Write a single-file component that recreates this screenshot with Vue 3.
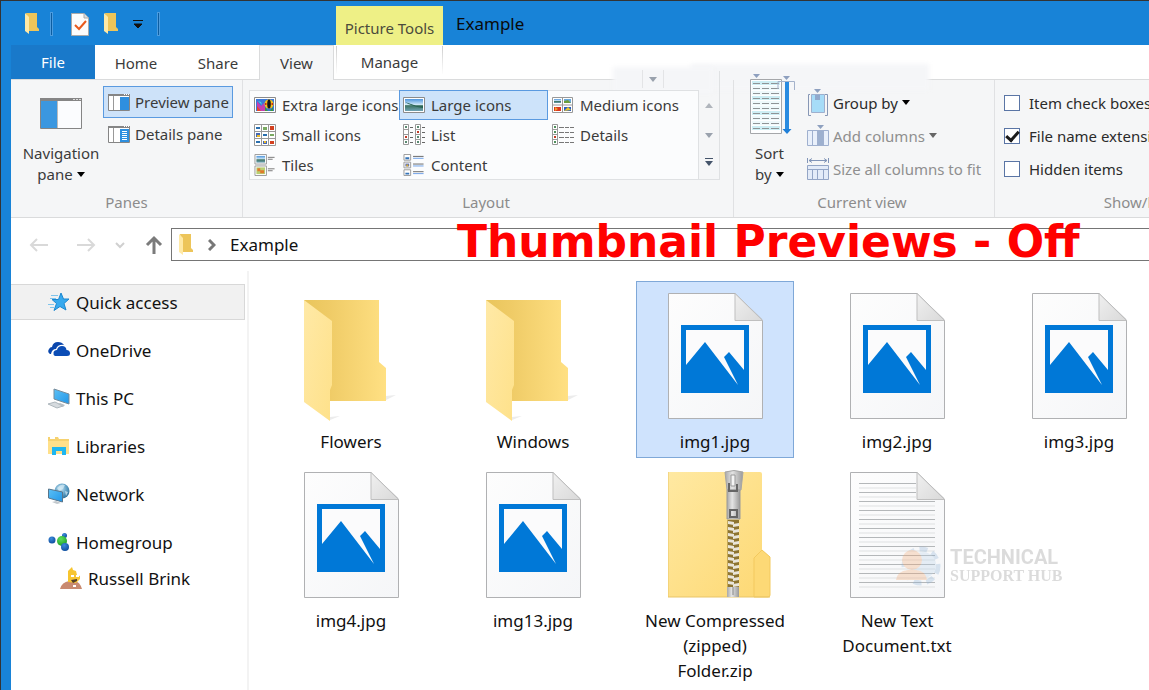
<script setup>
import { ref } from 'vue'

const layouts = [
  { label: 'Extra large icons', icon: 'i-xl' },
  { label: 'Large icons', icon: 'i-large' },
  { label: 'Medium icons', icon: 'i-medium' },
  { label: 'Small icons', icon: 'i-small' },
  { label: 'List', icon: 'i-list' },
  { label: 'Details', icon: 'i-details' },
  { label: 'Tiles', icon: 'i-tiles' },
  { label: 'Content', icon: 'i-content' },
]
const layout = ref('Large icons')

const checks = ref([
  { id: 'check-boxes', label: 'Item check boxes', on: false },
  { id: 'extensions', label: 'File name extensions', on: true },
  { id: 'hidden', label: 'Hidden items', on: false },
])

const places = [
  { label: 'Quick access', icon: 'i-star', current: true },
  { label: 'OneDrive', icon: 'i-cloud' },
  { label: 'This PC', icon: 'i-pc' },
  { label: 'Libraries', icon: 'i-lib' },
  { label: 'Network', icon: 'i-net' },
  { label: 'Homegroup', icon: 'i-home', child: { label: 'Russell Brink', icon: 'i-user' } },
]

const files = [
  { name: 'Flowers', icon: 'f-folder' },
  { name: 'Windows', icon: 'f-folder' },
  { name: 'img1.jpg', icon: 'f-image' },
  { name: 'img2.jpg', icon: 'f-image' },
  { name: 'img3.jpg', icon: 'f-image' },
  { name: 'img4.jpg', icon: 'f-image' },
  { name: 'img13.jpg', icon: 'f-image' },
  { name: 'New Compressed (zipped) Folder.zip', icon: 'f-zip' },
  { name: 'New Text Document.txt', icon: 'f-text', mark: true },
]
const selected = ref('img1.jpg')
const textLines = Array.from({ length: 24 }, (_, i) => i)
const teeth = Array.from({ length: 11 }, (_, i) => i)
const sortRows = Array.from({ length: 10 }, (_, i) => i)
</script>

<template>
  <div class="window">
    <svg class="defs" aria-hidden="true">
      <defs>
        <linearGradient id="g-back" x1="0" y1="0" x2="1" y2="0"><stop offset="0" stop-color="#e9c55c" /><stop offset=".3" stop-color="#efcb66" /><stop offset="1" stop-color="#ffe083" /></linearGradient>
        <linearGradient id="g-flap" x1="0" y1="0" x2="1" y2="1"><stop offset="0" stop-color="#ffe9a6" /><stop offset="1" stop-color="#fee18a" /></linearGradient>
        <linearGradient id="g-page" x1="0" y1="0" x2="1" y2="1"><stop offset="0" stop-color="#fdfdfd" /><stop offset="1" stop-color="#f5f6f8" /></linearGradient>
        <linearGradient id="g-fold" x1="0" y1="0" x2="1" y2="1"><stop offset="0" stop-color="#f0f0f0" /><stop offset="1" stop-color="#d9d9d9" /></linearGradient>
        <linearGradient id="g-metal" x1="0" y1="0" x2="1" y2="0"><stop offset="0" stop-color="#a8a8a8" /><stop offset=".4" stop-color="#e4e4e4" /><stop offset="1" stop-color="#999" /></linearGradient>
        <linearGradient id="g-zip" x1="0" y1="0" x2="1" y2="1"><stop offset="0" stop-color="#ffe9a2" /><stop offset="1" stop-color="#fdd873" /></linearGradient>
        <linearGradient id="g-land" x1="0" y1="0" x2="0" y2="1"><stop offset="0" stop-color="#4d94dc" /><stop offset=".5" stop-color="#d8eefa" /><stop offset=".55" stop-color="#3c7260" /><stop offset="1" stop-color="#6fa3b5" /></linearGradient>
        <linearGradient id="g-screen" x1="0" y1="0" x2="1" y2="1"><stop offset="0" stop-color="#5cc0f5" /><stop offset="1" stop-color="#2196e8" /></linearGradient>
        <radialGradient id="g-globe" cx=".4" cy=".35" r=".7"><stop offset="0" stop-color="#c9e4f2" /><stop offset=".6" stop-color="#5a9dc4" /><stop offset="1" stop-color="#2e6d97" /></radialGradient>
        <radialGradient id="g-blue" cx=".4" cy=".3" r=".7"><stop offset="0" stop-color="#3d8bdb" /><stop offset="1" stop-color="#0f4fa0" /></radialGradient>
        <radialGradient id="g-green" cx=".4" cy=".3" r=".7"><stop offset="0" stop-color="#5fe05c" /><stop offset="1" stop-color="#1fa32b" /></radialGradient>
      </defs>

      <symbol id="f-folder" viewBox="0 0 96 126" overflow="visible">
        <path d="M82 103l10-1-10 5zM26 124l10-1-10 4z" fill="#ececec" />
        <path d="M0 7H75V69L82 75V108H26L5 90z" fill="url(#g-back)" />
        <path d="M0 7L28 28V92L26 97V128L0 109z" fill="url(#g-flap)" />
      </symbol>
      <symbol id="page" viewBox="0 0 96 126">
        <path d="M.5.5H67L94.500 27V125.500H.5z" fill="url(#g-page)" stroke="#b0b1b3" />
        <path d="M67 .5V27.500H94.500z" fill="url(#g-fold)" stroke="#bfbfbf" />
      </symbol>
      <symbol id="f-image" viewBox="0 0 96 126">
        <use href="#page" width="96" height="126" />
        <path d="M13 32H81V100H13z" fill="#0078d7" />
        <path d="M18 37H76V77L61 59 56 64 70 92 37 49 18 72z" fill="#fbfbfc" />
      </symbol>
      <symbol id="f-text" viewBox="0 0 96 126">
        <use href="#page" width="96" height="126" />
        <path v-for="n in textLines" :key="n" :d="`M9 ${11.5 + n * 4.5}H${n < 4 ? 66 : 85}`" :stroke="n % 2 ? '#dfe1e2' : '#b4b7b9'" />
      </symbol>
      <symbol id="f-zip" viewBox="0 0 104 128">
        <path d="M0 2H92Q94 2 94 4V80L102 87V125Q102 127 100 127H0z" fill="url(#g-zip)" />
        <path d="M86 127V88L94 80L102 87V125Q102 127 100 127z" fill="#fdd976" stroke="#f3c95e" />
        <path d="M0 2V127H102" fill="none" stroke="#e9c568" />
        <path d="M59.500 50H71V118H59.500z" fill="#8d7430" />
        <g v-for="n in teeth" :key="n">
          <path :d="`M60 ${51 + n * 6}l6 1v3l-6-1zM65 ${54 + n * 6}l6-1v3l-6 1z`" fill="#e9e5da" />
        </g>
        <path d="M59 117h12v10h-12z" fill="url(#g-metal)" /><path d="M65 117v8" stroke="#888" />
        <path d="M57 2Q66-1 75 2L73 20H59z" fill="url(#g-metal)" stroke="#a5a5a5" />
        <path d="M59 20H72V49H59z" fill="url(#g-metal)" stroke="#999" />
        <path d="M63 5h4v11h-4z" fill="#f4f4f4" stroke="#999" /><path d="M61 13v8h8v-7M62 40h7v7h-7z" fill="none" stroke="#666" stroke-width="2" />
      </symbol>

      <symbol id="i-folder" viewBox="0 0 16 22"><path d="M2 0H13V14L15 16V18H5z" fill="#edc55a" /><path d="M1 0L5 4V21L1 18z" fill="#ffe9a6" /></symbol>
      <symbol id="i-doc" viewBox="0 0 18 23"><path d="M.5.5H13L17.500 5V22.500H.5z" fill="#fcfcfc" stroke="#aaa" /><path d="M13 .5V5H17.500" fill="#ddd" stroke="#aaa" /><path d="M4 12l4 4 7-8" fill="none" stroke="#e8591c" stroke-width="2" /></symbol>

      <symbol id="i-nav" viewBox="0 0 42 31"><path d="M.5.5h41v30H.5z" fill="#fbfcfe" stroke="#858585" /><path d="M0 0h42v3H0z" fill="#858585" /><path d="M1 3h16v27H1z" fill="#3b97e0" /><path d="M33 1.500h2m1 0h2m1 0h2" stroke="#ddd" /><path d="M17.500 3v27" stroke="#bbb" /></symbol>
      <symbol id="i-preview" viewBox="0 0 22 17"><path d="M.5.5h21v16H.5z" fill="#fff" stroke="#858585" /><path d="M0 0h22v2H0z" fill="#858585" /><path d="M12 3h9v13h-9z" fill="#2e8fdf" /><path d="M5.500 2v14" stroke="#999" /><path d="M16 .5h1m1 0h1m1 0h1" stroke="#fff" /></symbol>
      <symbol id="i-dpane" viewBox="0 0 22 17"><use href="#i-preview" width="22" height="17" /><path d="M14 5.500h5m-5 2h5m-5 2h5m-5 2h5m-5 2h5" stroke="#fff" /></symbol>

      <symbol id="i-xl" viewBox="0 0 22 22"><path d="M.5 3.500h21v15H.5z" fill="#fff" stroke="#8b8b8b" /><path d="M2 5h18v12H2z" fill="#3b78d8" /><path d="M3 7l4 5 3-3 2 8H3z" fill="#c33fb0" /><path d="M3 12l4 5H3z" fill="#e8452c" /><path d="M4 7l3 1 1 3z" fill="#49d6e8" /><ellipse cx="15" cy="10" rx="4.500" ry="4.500" fill="#f5c21a" /><ellipse cx="15" cy="10" rx="1.800" ry="4.500" fill="#171717" /><path d="M11 13l3 4h2l3-4v4h-8z" fill="#3a9a3a" /><path d="M11 10h1.500m5 0h1.500" stroke="#d12c12" stroke-width="2" /></symbol>
      <symbol id="i-large" viewBox="0 0 22 22"><path d="M.5 3.500h21v15H.5z" fill="#fff" stroke="#8b8b8b" /><path d="M2 5h18v12H2z" fill="url(#g-land)" /><path d="M2 8q6 4 18 6v-2q-7 1-9-1z" fill="#256150" /></symbol>
      <symbol id="i-medium" viewBox="0 0 22 22"><path d="M.5 3.500h20v15H.5zM10.500 3v16M0 11h21" fill="#fff" stroke="#999" /><path d="M2 5h7v4H2z" fill="url(#g-land)" /><path d="M12 5h7v4h-7z" fill="#68a8dd" /><path d="M12 7l4-1 3 3h-7z" fill="#6a9e3c" /><path d="M2 13h7v4H2z" fill="#d9381e" /><path d="M3 13l3 2-3 2z" fill="#f0a32d" /><path d="M12 13h7v4h-7z" fill="#2b5fc0" /><path d="M12 17l4-4 3 3z" fill="#e8c42a" /></symbol>
      <symbol id="i-small" viewBox="0 0 22 22"><path d="M.5.5h21v21H.5zM7.500 0v22M14.500 0v22M0 7.500h22M0 14.500h22" fill="#fff" stroke="#999" /><path d="M2 3h4v2H2zM9 10h4v2H9zM2 17h4v2H2z" fill="#2a6fae" /><path d="M9 3h4v3H9zM16 10h4v2h-4z" fill="#7aaa62" /><path d="M16 2h4v4h-4zM16 17h4v3h-4z" fill="#d3401f" /><path d="M2 9h4v4H2zM9 17h4v3H9z" fill="#4468b5" /><path d="M3 11h3v2H3zM10 17h2v2h-2z" fill="#edbb26" /></symbol>
      <symbol id="i-list" viewBox="0 0 22 22"><path d="M.5.500h5v20h-5zM.5 5.500h5m-5 5h5m-5 5h5M12.500.5h5v20h-5zM12.500 5.500h5m-5 5h5m-5 5h5" fill="#fff" stroke="#999" /><path d="M7 3.500h3m-3 5h3m-3 5h3m-3 5h3M19 3.500h3m-3 5h3m-3 5h3m-3 5h3" stroke="#666" /><path d="M2 3h2m10 0h2m-2 10h2M2 18h2m10 0h2" stroke="#5a8a72" stroke-width="2" /><path d="M2 13h2M14 8h2" stroke="#c23a26" stroke-width="2" /></symbol>
      <symbol id="i-details" viewBox="0 0 22 22"><path d="M.5.500h5v20h-5zM.5 5.500h5m-5 5h5m-5 5h5" fill="#fff" stroke="#999" /><path d="M7 3.500h5m1 0h4m1 0h4M7 8.500h5m1 0h4m1 0h4M7 13.500h5m1 0h4m1 0h4M7 18.500h5m1 0h4m1 0h4" stroke="#777" /><path d="M2 3h2M2 8h2M2 18h2" stroke="#4e8f5c" stroke-width="2" /><path d="M2 13h2" stroke="#c23a26" stroke-width="2" /></symbol>
      <symbol id="i-tiles" viewBox="0 0 22 23"><path d="M.5.500h12v10h-12zM.5 12.500h12v10h-12z" fill="#fff" stroke="#999" /><path d="M2 2h9v7H2z" fill="url(#g-land)" /><path d="M2 14h9v7H2z" fill="#b9cf72" /><path d="M3 15h3v3H3zM6 17h4v3H6z" fill="#e07a2c" /><path d="M14 3.500h7m-7 2h5m-5 10h7m-7 2h5" stroke="#777" /></symbol>
      <symbol id="i-content" viewBox="0 0 22 23"><path d="M.5.500h7v6h-7zM.5 8.500h7v6h-7zM.5 16.500h7v6h-7z" fill="#fff" stroke="#999" /><path d="M2 3.500h4v2H2zM2 19.500h4v2H2z" fill="#3574b8" /><path d="M2 10h4v3H2z" fill="#5a6db0" /><path d="M3 11h2v2H3z" fill="#e3b22a" /><path d="M10 2.500h11m-11 8h11m-11 8h11" stroke="#666" /><path d="M10 4.500h11m-11 8h11m-11 8h11" stroke="#6c9fe8" /></symbol>

      <symbol id="i-sort" viewBox="0 0 46 60">
        <path d="M.5 5.500h31v54h-31z" fill="#fdfeff" stroke="#a5a7aa" />
        <path v-for="n in sortRows" :key="n" :d="`M2 ${9 + n * 5}h28`" :stroke="n % 3 ? '#eef9fb' : '#cdeef4'" stroke-width="4" />
        <path v-for="n in sortRows" :key="`r${n}`" :d="`M3 ${9.5 + n * 5}h7m2 0h7m2 0h8`" stroke="#8f9496" />
        <path d="M3 0h7L6.500 4zM33 2h7L36.500 6z" fill="#8ea0bf" /><path d="M28 15V7.500H44.500V16" fill="none" stroke="#a4b2cb" />
        <path d="M35 8h4v48h-4z" fill="#2a8be0" /><path d="M32.500 55h9L37 60z" fill="#1f7fd8" />
      </symbol>
      <symbol id="i-group" viewBox="0 0 22 28"><path d="M7 0h7l-3.500 4z" fill="#8ea0bf" /><path d="M4.500 5.500h13v18h-13z" fill="#a6dcf8" stroke="#9fb0ce" /><path d="M8 6h5v5H8z" fill="#91a9cc" /><path d="M3 5.500H1.500V26.500H4M18 5.500h2.500V26.500H18" fill="none" stroke="#8797b5" /></symbol>
      <symbol id="i-add" viewBox="0 0 22 22"><path d="M10 0h7l-3.500 4z" fill="#8ea0bf" /><path d="M.5 5.500h21v15H.5zM5.500 5v16M10.500 5v16M16.500 5v16" fill="#e9f0fb" stroke="#9fb0cf" /><path d="M11 6h5v14h-5z" fill="#9db0cf" /></symbol>
      <symbol id="i-size" viewBox="0 0 22 22"><path d="M.5 0v5M21.500 0v5M2 2.500h18M5 .5l-3 2 3 2M17 .5l3 2-3 2" fill="none" stroke="#8295b8" /><path d="M.5 7.500h21v14H.5zM.5 11.500h21M5.500 11v11M10.500 11v11M16.500 11v11" fill="#e3ebf8" stroke="#93a5c6" /></symbol>

      <symbol id="i-star" viewBox="0 0 22 20"><path d="M13 1l2.500 6H21l-5 4.500 2 6.500-6-3.500-6 4 2.500-7L4 7.500h6.500z" fill="#36a9ee" stroke="#1b87d0" /><path d="M3 3.500h7M2 6.500h6M0 12.500h6M2 15.500h4" stroke="#7fc4ec" /></symbol>
      <symbol id="i-cloud" viewBox="0 0 22 20"><path d="M2 14Q-1 12 1 9q1-2 3-2 1-5 6-5 4 0 6 3-6-1-8 4-4 0-5 5z" fill="#0a47ad" /><path d="M7 16q-2-1-1.500-3.500T9 10q1-4 5-4 4 0 4.500 4Q22 10 22 13.500q0 2.500-3 2.500z" fill="#0b4db6" /></symbol>
      <symbol id="i-pc" viewBox="0 0 22 22"><path d="M6 2L21 7V17L6 12z" fill="url(#g-screen)" stroke="#768b9a" /><path d="M0 17l7-2 8 4-6 2z" fill="#d6dbdf" stroke="#aeb7bd" /><path d="M12 16l5 2-2 2-5-3z" fill="#b7bec4" /></symbol>
      <symbol id="i-lib" viewBox="0 0 22 20"><path d="M0 1h10l1 2h10v15H0z" fill="#f6d270" /><path d="M2 1h5v2H2z" fill="#fff" /><path d="M0 5h21v13H0z" fill="#ffe08a" /><path d="M4 11h14v8h-4v-4H8v4H4z" fill="#1fb6f0" /></symbol>
      <symbol id="i-net" viewBox="0 0 22 22"><circle cx="14" cy="8" r="7.500" fill="url(#g-globe)" /><path d="M9 5q4-5 8-3l-2 4-4 2zM17 8l3 1-2 4z" fill="#d7edf6" opacity=".7" /><path d="M.5 6L14.500 9V19L.5 15z" fill="url(#g-screen)" stroke="#58758b" /><path d="M4 19l5 2 4-1-5-2z" fill="#c2c8cd" /></symbol>
      <symbol id="i-home" viewBox="0 0 22 20"><circle cx="4" cy="8" r="3.500" fill="url(#g-blue)" /><circle cx="16.500" cy="3.500" r="2.500" fill="url(#g-blue)" /><circle cx="14" cy="9" r="5" fill="url(#g-green)" /><circle cx="17" cy="15" r="4" fill="url(#g-blue)" /></symbol>
      <symbol id="i-user" viewBox="0 0 22 22"><path d="M0 22q2-7 9-8h6q5 1 7 8z" fill="#c98a70" /><path d="M8 15L8 4 12 0l1 3 3 1 1 4 3 1v3l-4 4z" fill="#f7c52f" /><path d="M11 8h3v2h-3zM16 8h3v2h-3z" fill="#fff" /><path d="M11 13l6-1v2l-4 2z" fill="#4f3e29" /><path d="M13 18h3v2h-3z" fill="#fff" /></symbol>
    </svg>

    <header class="titlebar">
      <div class="quick">
        <svg class="s-folder"><use href="#i-folder" /></svg>
        <span class="bar first"></span>
        <button class="plain" aria-label="Properties"><svg class="s-doc"><use href="#i-doc" /></svg></button>
        <button class="plain" aria-label="New folder"><svg class="s-folder"><use href="#i-folder" /></svg></button>
        <button class="plain" aria-label="Customize toolbar"><svg width="10" height="8"><path d="M0 .5h10M1 4h8L5 8z" stroke="#111" fill="#111" stroke-width="1" /></svg></button>
        <span class="bar"></span>
      </div>
      <div class="tools">Picture Tools</div>
      <div class="caption">Example</div>
    </header>

    <nav class="tabs">
      <button class="tab file">File</button>
      <button class="tab">Home</button>
      <button class="tab share">Share</button>
      <button class="tab active">View</button>
      <button class="tab manage">Manage</button>
    </nav>

    <section class="ribbon">
      <div class="patch"></div>
      <div class="patch left"></div>
      <div class="stray"><span class="tri"></span></div>
      <div class="group panes">
        <div class="body">
          <button class="big"><svg width="42" height="31"><use href="#i-nav" /></svg><span>Navigation<br />pane <i class="drop"></i></span></button>
          <div class="stack">
            <button class="pane on"><svg width="22" height="17"><use href="#i-preview" /></svg>Preview pane</button>
            <button class="pane"><svg width="22" height="17"><use href="#i-dpane" /></svg>Details pane</button>
          </div>
        </div>
        <div class="name">Panes</div>
      </div>
      <div class="group layout">
        <div class="body">
          <div class="gallery">
            <button v-for="l in layouts" :key="l.label" class="option" :class="{ on: l.label === layout }" @click="layout = l.label">
              <svg width="22" height="22"><use :href="`#${l.icon}`" /></svg>{{ l.label }}
            </button>
          </div>
          <div class="scroller">
            <button class="plain" aria-label="Up"><span class="tri up"></span></button>
            <button class="plain" aria-label="Down"><span class="tri"></span></button>
            <button class="plain" aria-label="More"><span class="tri more"></span></button>
          </div>
        </div>
        <div class="name">Layout</div>
      </div>
      <div class="group view">
        <div class="body">
          <button class="big sort"><svg width="46" height="60"><use href="#i-sort" /></svg><span>Sort<br />by <i class="drop"></i></span></button>
          <div class="rows">
            <button class="row"><svg width="22" height="28"><use href="#i-group" /></svg>Group by <i class="drop"></i></button>
            <button class="row off"><svg width="22" height="22"><use href="#i-add" /></svg>Add columns <i class="drop"></i></button>
            <button class="row off"><svg width="22" height="22"><use href="#i-size" /></svg>Size all columns to fit</button>
          </div>
        </div>
        <div class="name">Current view</div>
      </div>
      <div class="group show">
        <div class="body rows">
          <label v-for="c in checks" :key="c.id" class="row check" :for="c.id"><input :id="c.id" v-model="c.on" type="checkbox" />{{ c.label }}</label>
        </div>
        <div class="name">Show/hide</div>
      </div>
    </section>

    <section class="address">
      <button class="plain" aria-label="Back"><svg width="20" height="16"><path d="M19 8H2M8 2L2 8l6 6" fill="none" stroke="#d9d9d9" stroke-width="2" /></svg></button>
      <button class="plain fwd" aria-label="Forward"><svg width="20" height="16"><path d="M1 8h17M12 2l6 6-6 6" fill="none" stroke="#d9d9d9" stroke-width="2" /></svg></button>
      <button class="plain rec" aria-label="Recent"><svg width="10" height="8"><path d="M1 2l4 4 4-4" fill="none" stroke="#d0d0d0" stroke-width="2" /></svg></button>
      <button class="plain" aria-label="Up one level"><svg width="18" height="20"><path d="M9 19V3M2 10l7-7 7 7" fill="none" stroke="#7b7b7b" stroke-width="3" /></svg></button>
      <div class="path">
        <svg class="s-folder"><use href="#i-folder" /></svg>
        <svg width="8" height="12"><path d="M1 1l5 5-5 5" fill="none" stroke="#777" stroke-width="3" /></svg>
        <a href="#">Example</a>
      </div>
      <h1 class="banner">Thumbnail Previews - Off</h1>
    </section>

    <div class="content">
      <aside class="places">
        <template v-for="p in places" :key="p.label">
          <a href="#" class="place" :class="{ current: p.current }"><svg width="22" height="22"><use :href="`#${p.icon}`" /></svg>{{ p.label }}</a>
          <a v-if="p.child" href="#" class="place child"><svg width="22" height="22"><use :href="`#${p.child.icon}`" /></svg>{{ p.child.label }}</a>
        </template>
      </aside>
      <main class="files">
        <button v-for="f in files" :key="f.name" class="item" :class="{ selected: f.name === selected }" @click="selected = f.name">
          <svg :class="f.icon === 'f-zip' ? 'zip' : 'thumb'"><use :href="`#${f.icon}`" /></svg>
          <span class="label">{{ f.name }}</span>
          <span v-if="f.mark" class="mark">
            <svg width="46" height="42" viewBox="0 0 46 42"><circle cx="25" cy="21" r="17" fill="none" stroke="#8fb3d6" stroke-width="5" stroke-dasharray="8 5" /><circle cx="27" cy="20" r="13" fill="#b9d3ea" /><circle cx="16" cy="15" r="10" fill="#f3a66e" /><path d="M0 35q1-9 12-10h8q10 1 11 10z" fill="#f3a66e" /></svg>
            <span><b>TECHNICAL</b><em>SUPPORT HUB</em></span>
          </span>
        </button>
      </main>
    </div>
  </div>
</template>

<style>
body { margin: 0; background: #fff; }
</style>

<style scoped>
* { box-sizing: border-box; }
.window { position: relative; min-height: 100vh; overflow: hidden; border-left: 1px solid #333; border-top: 1px solid #333; background: #1883d7; padding-left: 10px; font-family: "Noto Sans", "Open Sans", sans-serif; font-size: 15px; color: #3b3b3b; display: flex; flex-direction: column; white-space: nowrap; }
button { font: inherit; color: inherit; background: none; border: 0; padding: 0; margin: 0; white-space: nowrap; }
a { color: inherit; text-decoration: none; }
svg { display: block; flex: none; }
.defs { position: absolute; width: 0; height: 0; }
.plain { display: flex; align-items: center; justify-content: center; }
.s-folder { width: 16px; height: 22px; }
.s-doc { width: 18px; height: 23px; }

.titlebar { display: flex; height: 44px; }
.quick { display: flex; align-items: center; width: 325px; padding: 2px 0 0 13px; gap: 14px; }
.quick > :first-child { margin-right: -4px; }
.bar { width: 3px; height: 24px; border: 1px solid #4b9cdf; background: #0c5da0; }
.bar.first { margin-right: 4px; }
.tools { width: 107px; margin-top: 5px; background: #eef086; color: #4b4b3c; display: flex; align-items: center; justify-content: center; padding-top: 4px; }
.caption { padding-left: 13px; line-height: 46px; font-size: 17px; color: #0a0a0a; }

.tabs { display: flex; height: 35px; background: #fff; border-bottom: 1px solid #dadbdc; }
.tab { height: 35px; width: 82px; }
.file { width: 84px; background: #1979ca; color: #fff; height: 34px; }
.active { width: 75px; background: #f5f6f7; border: 1px solid #dadbdc; border-bottom: 0; }
.manage { width: 107px; margin-left: 2px; border: 1px solid; border-image: linear-gradient(#ccc, #fff) 1; border-top: 0; border-bottom: 0; height: 28px; margin-top: 1px; padding-top: 4px; }

.ribbon { position: relative; display: flex; height: 138px; background: #f5f6f7; border-bottom: 1px solid #dadbdc; }
.patch { position: absolute; left: 680px; right: 220px; top: -16px; height: 26px; background: #f5f6f8; filter: blur(2px); }
.patch.left { left: 602px; right: auto; width: 100px; top: -13px; height: 26px; }
.stray { position: absolute; left: 631px; top: -10px; width: 22px; height: 18px; border: solid #e3e4e6; border-width: 0 1px; display: flex; align-items: center; justify-content: center; }
.group { position: relative; display: flex; flex-direction: column; flex: none; border-right: 1px solid #e0e1e3; }
.body { display: flex; flex: 1; }
.name { height: 29px; line-height: 29px; text-align: center; color: #8c8c8c; }
.panes { width: 232px; }
.layout { width: 491px; }
.layout .name, .view .name { padding-right: 4px; }
.view { width: 261px; }
.show { width: 292px; border: 0; }
.big { width: 92px; padding: 0 0 0 8px; display: flex; flex-direction: column; align-items: center; gap: 14px; line-height: 21px; padding-top: 18px; align-self: flex-start; }
.drop { display: inline-block; border: 4px solid transparent; border-top: 5px solid #000; border-bottom: 0; vertical-align: 3px; }
.stack { padding-top: 6px; }
.pane { display: flex; align-items: center; gap: 5px; width: 130px; height: 32px; padding-left: 4px; border: 1px solid transparent; }
.on { background: #cde2f9; border-color: #5a9ae0; }
.gallery { width: 450px; height: 90px; margin: 10px 0 0 6px; display: grid; grid-template-columns: repeat(3, 149px); grid-template-rows: repeat(3, 30px); background: #fbfcfd; box-shadow: inset 0 0 0 1px #dfe1e3; padding-left: 1px; }
.option { display: flex; align-items: center; gap: 6px; padding-left: 3px; border: 1px solid transparent; }
.option.on { background: #cde3fa; border-color: #5a9ae0; }
.scroller { width: 21px; height: 109px; margin-top: -9px; border: solid #dfe1e3; border-width: 0 1px 1px 0; display: grid; grid-template-rows: 30px 30px 26px; align-content: end; padding-bottom: 3px; }
.tri { border: 4px solid transparent; border-top: 5px solid #9aa2ad; border-bottom: 0; }
.up { border-top: 0; border-bottom: 5px solid #b0b5bc; }
.more { position: relative; border-top-color: #44546a; }
.more::before { content: ""; position: absolute; left: -4px; top: -8px; width: 8px; height: 1px; background: #44546a; }
.sort { width: 73px; padding: 0; gap: 9px; margin-top: -6px; }
.sort svg { margin-left: 5px; }
.sort span { padding-right: 2px; text-align: left; }
.rows { display: flex; flex-direction: column; padding-top: 6px; }
.row { display: flex; align-items: center; gap: 4px; height: 33px; color: #2b2b2b; }
.off { color: #8f8f8f; }
.off .drop { border-top-color: #666; }
.check { padding-left: 9px; gap: 9px; }
.check input { appearance: none; width: 16px; height: 16px; margin: 0; border: 1px solid #5a75a5; background: #fff; display: grid; place-items: center; }
.check input:checked::after { content: ""; width: 10px; height: 5px; border: solid #1b1b1b; border-width: 0 0 3px 3px; transform: translateY(-1px) rotate(-48deg); }

.address { position: relative; display: flex; align-items: center; height: 53px; background: #fff; padding-left: 18px; font-size: 17px; color: #111; }
.fwd { margin-left: 27px; }
.rec { margin: 0 20px 0 19px; }
.path { flex: 1; height: 33px; margin-left: 8px; border: 1px solid #757575; border-right: 0; display: flex; align-items: center; padding-left: 6px; gap: 14px; }
.banner { position: absolute; left: 446px; top: 0; margin: 0; font: 700 44px/47px "DejaVu Sans", sans-serif; color: #f00; }

.content { flex: 1; display: flex; background: #fff; color: #111; font-size: 17px; }
.places { width: 238px; flex: none; padding-top: 13px; border-right: 2px solid #f3f3f3; display: flex; flex-direction: column; }
.place { display: flex; align-items: center; gap: 6px; width: 234px; height: 36px; padding-left: 37px; margin-bottom: 12px; border: 1px solid transparent; border-left: 0; }
.place.current { background: #f1f1f1; border-color: #d8d8d8; }
.child { margin-top: -12px; padding-left: 49px; }
.files { display: grid; grid-template-columns: repeat(5, 158px); column-gap: 24px; row-gap: 2px; align-content: start; padding: 10px 0 0 23px; }
.item { position: relative; display: flex; flex-direction: column; align-items: center; justify-content: flex-start; min-height: 177px; padding: 11px 8px 0; border: 1px solid transparent; }
.selected { background: #cfe3fd; border-color: #7fa8d8; }
.thumb { width: 96px; height: 126px; margin-left: 2px; overflow: visible; }
.zip { width: 104px; height: 128px; margin: -2px 0 0 10px; }
.label { margin-top: 10px; line-height: 25px; white-space: normal; text-align: center; }
.mark { position: absolute; left: 77px; top: 84px; display: flex; align-items: center; gap: 8px; opacity: .3; color: #8c8c8c; text-align: left; }
.mark b { display: block; font: 700 20px/20px Roboto, sans-serif; }
.mark em { display: block; font: 700 16px/18px "Liberation Serif", serif; }
</style>
